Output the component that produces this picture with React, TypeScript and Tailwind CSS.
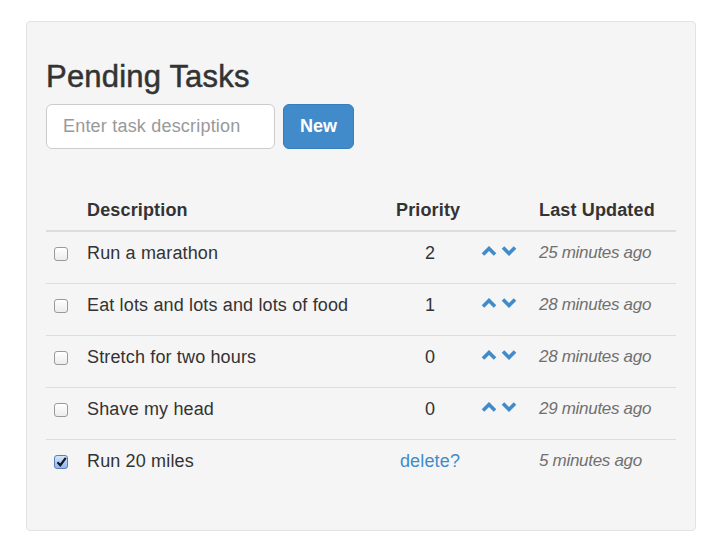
import React from 'react';

type Task = {
  id: number;
  description: string;
  priority: number;
  updated: string;
  done: boolean;
};

const tasks: Task[] = [
  { id: 1, description: 'Run a marathon', priority: 2, updated: '25 minutes ago', done: false },
  { id: 2, description: 'Eat lots and lots and lots of food', priority: 1, updated: '28 minutes ago', done: false },
  { id: 3, description: 'Stretch for two hours', priority: 0, updated: '28 minutes ago', done: false },
  { id: 4, description: 'Shave my head', priority: 0, updated: '29 minutes ago', done: false },
  { id: 5, description: 'Run 20 miles', priority: 0, updated: '5 minutes ago', done: true },
];

function Checkbox({ checked }: { checked: boolean }) {
  if (checked) {
    return (
      <span className="flex h-[14px] w-[14px] items-center justify-center rounded-[3px] border border-[#5a7fb8] bg-gradient-to-b from-[#d6e6fb] to-[#8fb6ec]">
        <svg width="11" height="10" viewBox="0 0 11 10">
          <path d="M1.5 5.2 L4.3 8.2 L9.8 0.8" fill="none" stroke="#111827" strokeWidth="2.2" />
        </svg>
      </span>
    );
  }
  return (
    <span className="block h-[14px] w-[14px] rounded-[3px] border border-[#9a9a9a] bg-gradient-to-b from-white to-[#ececec]" />
  );
}

function Arrows() {
  return (
    <div className="flex items-center gap-[4px] pt-[6px]">
      <svg width="16" height="10" viewBox="0 0 16 10">
        <path d="M2 8.5 L8 2.5 L14 8.5" fill="none" stroke="#428bca" strokeWidth="3.6" />
      </svg>
      <svg width="16" height="10" viewBox="0 0 16 10">
        <path d="M2 1.5 L8 7.5 L14 1.5" fill="none" stroke="#428bca" strokeWidth="3.6" />
      </svg>
    </div>
  );
}

export default function App() {
  return (
    <div className="min-h-[557px] bg-white pl-[26px] pt-[21px] font-['Liberation_Sans',Arial,sans-serif] text-[#333]">
      <div className="w-[670px] rounded-[4px] border border-[#e3e3e3] bg-[#f5f5f5] px-[19px] pb-[19px] pt-[38px]">
        <h2 className="text-[31px] leading-[34px] tracking-[0.2px] text-[#333] [-webkit-text-stroke:0.5px_#333]">
          Pending Tasks
        </h2>
        <div className="mt-[10px] flex gap-[8px]">
          <input
            className="h-[45px] w-[229px] rounded-[6px] border border-[#ccc] bg-white px-[16px] text-[18px] tracking-[0.2px] text-[#555] outline-none placeholder:text-[#999]"
            placeholder="Enter task description"
          />
          <button className="h-[45px] w-[71px] rounded-[6px] border border-[#357ebd] bg-[#428bca] text-[18px] font-bold text-white">
            New
          </button>
        </div>

        <table className="mt-[38px] mb-[20px] w-[630px] border-collapse text-[18px] leading-[26px] tracking-[0.15px]">
          <thead>
            <tr className="h-[44px] border-b-2 border-[#ddd]">
              <th className="w-[33px]" />
              <th className="w-[309px] px-[8px] pb-[7px] text-left align-bottom font-bold">Description</th>
              <th className="w-[84px] px-[8px] pb-[7px] text-left align-bottom font-bold">Priority</th>
              <th className="w-[59px]" />
              <th className="px-[8px] pb-[7px] text-left align-bottom font-bold">Last Updated</th>
            </tr>
          </thead>
          <tbody>
            {tasks.map((t, i) => (
              <tr key={t.id} className={i === 0 ? 'h-[52px]' : 'h-[52px] border-t border-[#ddd]'}>
                <td className="pl-[8px] pt-[15px] align-top">
                  <Checkbox checked={t.done} />
                </td>
                <td className="px-[8px] pt-[8px] align-top">{t.description}</td>
                {t.done ? (
                  <>
                    <td className="px-[8px] pt-[8px] text-center align-top text-[#428bca]">delete?</td>
                    <td />
                  </>
                ) : (
                  <>
                    <td className="px-[8px] pt-[8px] text-center align-top">{t.priority}</td>
                    <td className="px-[9px] pt-[8px] align-top">
                      <Arrows />
                    </td>
                  </>
                )}
                <td className="px-[8px] pt-[8px] align-top text-[17px] font-light italic tracking-[-0.3px] text-[#707070]">
                  {t.updated}
                </td>
              </tr>
            ))}
          </tbody>
        </table>
      </div>
    </div>
  );
}
